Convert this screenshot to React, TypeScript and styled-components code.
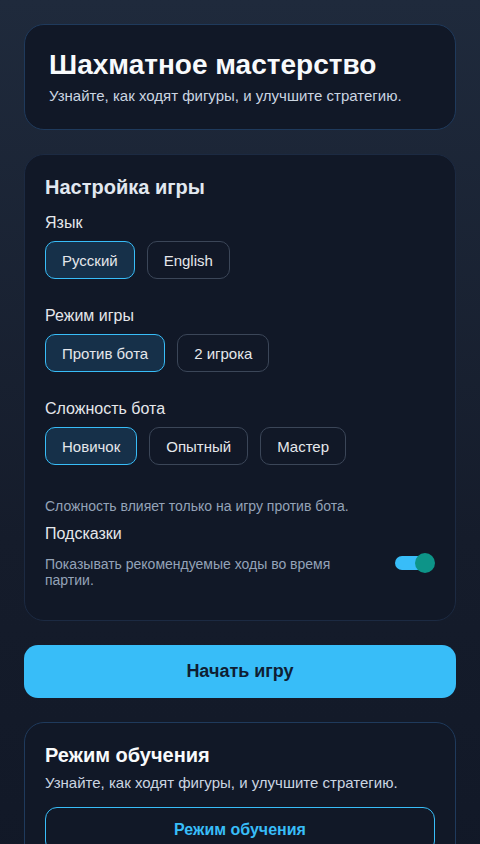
import { useState } from "react"
import styled, { createGlobalStyle } from "styled-components"

const GlobalStyle = createGlobalStyle`
  * {
    box-sizing: border-box;
  }
  html, body {
    margin: 0;
    padding: 0;
  }
  body {
    font-family: "Liberation Sans", Arial, sans-serif;
    background: linear-gradient(180deg, #1f2a3c 0%, #151c2b 60%, #111827 100%);
    min-height: 100vh;
    color: #f1f5f9;
  }
`

const Page = styled.main`
  display: flex;
  flex-direction: column;
  gap: 24px;
  padding: 24px;
  min-height: 100vh;
`

const Card = styled.section<{ accent?: boolean }>`
  display: flex;
  flex-direction: column;
  background: #111827;
  border: 1px solid ${(p) => (p.accent ? "#1f3a5c" : "#1c2a42")};
  border-radius: 20px;
  padding: 20px;
`

// шапка: чуть больше отступы, чем у остальных карточек
const HeroCard = styled(Card)`
  padding: 24px 24px 23px;
`

const HeroTitle = styled.h1`
  margin: 0;
  font-size: 28px;
  line-height: 32px;
  font-weight: 700;
  color: #f8fafc;
`

const Subtitle = styled.p`
  margin: 5px 0 0;
  font-size: 15px;
  line-height: 20px;
  color: #cbd5e1;
`

const CardTitle = styled.h2`
  margin: 0 0 14px;
  font-size: 20px;
  line-height: 24px;
  font-weight: 700;
  color: #e2e8f0;
`

const Section = styled.div`
  display: flex;
  flex-direction: column;
  gap: 8px;
  margin-bottom: 27px;
`

const Label = styled.div`
  font-size: 16px;
  line-height: 20px;
  color: #e5e7eb;
`

const Options = styled.div`
  display: flex;
  flex-wrap: wrap;
  gap: 12px;
`

const Option = styled.button<{ active: boolean }>`
  height: 38px;
  padding: 0 16px;
  border-radius: 10px;
  font-family: inherit;
  font-size: 15px;
  color: #e5e7eb;
  cursor: pointer;
  border: 1px solid ${(p) => (p.active ? "#38bdf8" : "#3b4658")};
  background: ${(p) => (p.active ? "#163049" : "transparent")};
`

const Note = styled.p`
  margin: 5px 0 9px;
  font-size: 14px;
  line-height: 18px;
  color: #94a3b8;
`

const HintRow = styled.div`
  display: flex;
  align-items: flex-start;
  gap: 24px;
  margin-top: 9px;
  margin-bottom: 12px;
`

const HintText = styled.p`
  flex: 1;
  margin: 3px 0 0;
  font-size: 14px;
  line-height: 16px;
  color: #94a3b8;
`

const Toggle = styled.button<{ on: boolean }>`
  position: relative;
  width: 40px;
  height: 20px;
  padding: 0;
  border: none;
  background: none;
  cursor: pointer;
  flex-shrink: 0;

  &::before {
    content: "";
    position: absolute;
    left: 0;
    top: 3px;
    width: 34px;
    height: 14px;
    border-radius: 7px;
    background: ${(p) => (p.on ? "#38bdf8" : "#475569")};
  }

  &::after {
    content: "";
    position: absolute;
    top: 0;
    left: ${(p) => (p.on ? "20px" : "0")};
    width: 20px;
    height: 20px;
    border-radius: 50%;
    background: ${(p) => (p.on ? "#0d9488" : "#cbd5e1")};
  }
`

const StartButton = styled.button`
  height: 53px;
  border: none;
  border-radius: 14px;
  background: #38bdf8;
  color: #0f1e33;
  font-family: inherit;
  font-size: 18px;
  font-weight: 700;
  cursor: pointer;
`

const LearnTitle = styled.h2`
  margin: 0;
  font-size: 20px;
  line-height: 24px;
  font-weight: 700;
  color: #f8fafc;
`

const LearnText = styled.p`
  margin: 6px 0 14px;
  font-size: 15px;
  line-height: 20px;
  color: #cbd5e1;
`

const OutlineButton = styled.button`
  height: 46px;
  border: 1px solid #38bdf8;
  border-radius: 12px;
  background: transparent;
  color: #38bdf8;
  font-family: inherit;
  font-size: 16px;
  font-weight: 700;
  cursor: pointer;
`

type Choice = { id: string; label: string }

function OptionGroup(props: { label: string; items: Choice[]; value: string; onChange: (v: string) => void }) {
  return (
    <Section>
      <Label>{props.label}</Label>
      <Options>
        {props.items.map((item) => (
          <Option key={item.id} active={item.id === props.value} onClick={() => props.onChange(item.id)}>
            {item.label}
          </Option>
        ))}
      </Options>
    </Section>
  )
}

export default function App() {
  const [lang, setLang] = useState("ru")
  const [mode, setMode] = useState("bot")
  const [level, setLevel] = useState("easy")
  const [hints, setHints] = useState(true)

  return (
    <>
      <GlobalStyle />
      <Page>
        <HeroCard accent>
          <HeroTitle>Шахматное мастерство</HeroTitle>
          <Subtitle>Узнайте, как ходят фигуры, и улучшите стратегию.</Subtitle>
        </HeroCard>

        <Card>
          <CardTitle>Настройка игры</CardTitle>
          <OptionGroup
            label="Язык"
            value={lang}
            onChange={setLang}
            items={[
              { id: "ru", label: "Русский" },
              { id: "en", label: "English" },
            ]}
          />
          <OptionGroup
            label="Режим игры"
            value={mode}
            onChange={setMode}
            items={[
              { id: "bot", label: "Против бота" },
              { id: "pvp", label: "2 игрока" },
            ]}
          />
          <OptionGroup
            label="Сложность бота"
            value={level}
            onChange={setLevel}
            items={[
              { id: "easy", label: "Новичок" },
              { id: "mid", label: "Опытный" },
              { id: "hard", label: "Мастер" },
            ]}
          />
          <Note>Сложность влияет только на игру против бота.</Note>
          <Label>Подсказки</Label>
          <HintRow>
            <HintText>Показывать рекомендуемые ходы во время партии.</HintText>
            <Toggle on={hints} onClick={() => setHints((h) => !h)} aria-label="Подсказки" />
          </HintRow>
        </Card>

        <StartButton>Начать игру</StartButton>

        <Card accent>
          <LearnTitle>Режим обучения</LearnTitle>
          <LearnText>Узнайте, как ходят фигуры, и улучшите стратегию.</LearnText>
          <OutlineButton>Режим обучения</OutlineButton>
        </Card>
      </Page>
    </>
  )
}
